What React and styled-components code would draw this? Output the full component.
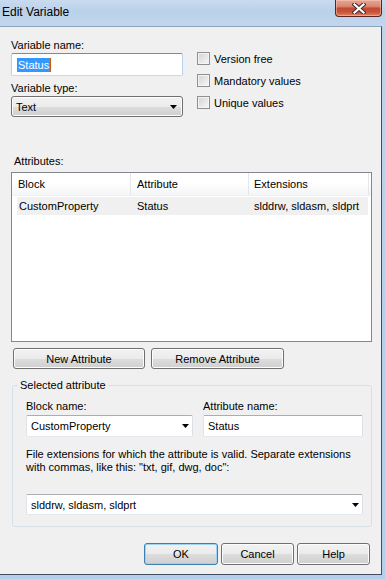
import React from "react";
import styled, { createGlobalStyle, css } from "styled-components";

const Global = createGlobalStyle`
  html, body { margin: 0; padding: 0; overflow: hidden; }
  body { font-family: "Liberation Sans", Arial, sans-serif; font-size: 11px; color: #000; }
  * { box-sizing: border-box; }
`;

const Window = styled.div`
  width: 385px;
  height: 579px;
  display: flex;
  flex-direction: column;
  background: linear-gradient(to bottom, #bfd4ea 0%, #b6cfea 60%, #b3cfec 100%);
`;

const TitleBar = styled.div`
  height: 26px;
  display: flex;
  align-items: flex-start;
  background: linear-gradient(to bottom, #c9dbee 0%, #bad1ea 45%, #c2d7ee 100%);
`;

const Title = styled.div`
  font-family: "Liberation Sans", Arial, sans-serif;
  font-size: 12px;
  line-height: 14px;
  padding: 5px 0 0 2px;
  color: #000;
`;

const CloseButton = styled.div`
  margin-left: auto;
  margin-right: 3px;
  width: 47px;
  height: 17px;
  border: 1px solid #5b2420;
  border-top: none;
  border-radius: 0 0 4px 4px;
  background: linear-gradient(
    to bottom,
    #e6a796 0%,
    #d98670 40%,
    #c24a31 52%,
    #c8533a 75%,
    #dc8467 100%
  );
  box-shadow: inset 0 0 0 1px rgba(255, 210, 200, 0.45);
  display: flex;
  align-items: center;
  justify-content: center;
`;

const Client = styled.div`
  flex: 1;
  margin: 0 3px 4px 0;
  background: #f0f0f0;
  border-top: 1px solid #8fa3bb;
  border-right: 1px solid #3f4d5e;
  border-bottom: 1px solid #3f4d5e;
  display: flex;
  flex-direction: column;
`;

const TopRow = styled.div`
  display: flex;
  gap: 14px;
  padding: 12px 0 0 11px;
`;

const LeftCol = styled.div`
  width: 172px;
  display: flex;
  flex-direction: column;
`;

const RightCol = styled.div`
  display: flex;
  flex-direction: column;
  gap: 9px;
  padding-top: 13px;
`;

const Label = styled.div`
  line-height: 13px;
  height: 13px;
  white-space: nowrap;
  margin-top: ${(p) => p.$mt || 0}px;
  margin-left: ${(p) => p.$ml || 0}px;
`;

const TextBox = styled.div`
  height: ${(p) => p.$h || 22}px;
  margin-top: ${(p) => p.$mt || 0}px;
  background: #fff;
  border: 1px solid;
  border-color: ${(p) =>
    p.$focused ? "#5b93c9 #b4d0ea #c5dcef #b4d0ea" : "#abadb3 #dbdfe6 #e3e9ef #e2e3ea"};
  border-radius: 2px;
  display: flex;
  align-items: center;
  padding-left: ${(p) => p.$pl || 4}px;
  white-space: nowrap;
`;

const Selected = styled.span`
  background: #3399ff;
  color: #fff;
  line-height: 14px;
  padding: 0 1px;
  border-right: 1px solid #c06010;
`;

const winButton = css`
  border: 1px solid #707070;
  border-radius: 3px;
  background: linear-gradient(to bottom, #f2f2f2 0%, #ebebeb 50%, #dddddd 51%, #cfcfcf 100%);
  box-shadow: inset 0 0 0 1px #fcfcfc;
`;

const DropList = styled.div`
  ${winButton};
  height: 21px;
  margin-top: 1px;
  display: flex;
  align-items: center;
  padding: 0 5px 0 4px;
`;

const ComboBox = styled.div`
  height: ${(p) => p.$h || 22}px;
  margin-top: ${(p) => p.$mt || 0}px;
  background: #fff;
  border: 1px solid;
  border-color: #abadb3 #dbdfe6 #e3e9ef #e2e3ea;
  border-radius: 2px;
  display: flex;
  align-items: center;
  padding: 0 3px 0 4px;
`;

const ComboText = styled.span`
  flex: 1;
  white-space: nowrap;
`;

const Arrow = () => (
  <svg width="7" height="4" viewBox="0 0 7 4">
    <polygon points="0,0 7,0 3.5,4" fill="#000" />
  </svg>
);

const CheckRow = styled.label`
  display: flex;
  align-items: center;
  gap: 4px;
  height: 13px;
`;

const CheckBox = styled.span`
  width: 13px;
  height: 13px;
  border: 1px solid #8e8f8f;
  background: linear-gradient(135deg, #d2d2d2 0%, #e9e9e9 60%, #f7f7f7 100%);
  box-shadow: inset 0 0 0 1px #f4f4f4;
`;

const ListView = styled.div`
  width: 361px;
  height: 170px;
  margin: 4px 0 0 11px;
  border: 1px solid #828790;
  background: #fff;
`;

const Header = styled.div`
  display: grid;
  grid-template-columns: 119px 118px 120px;
  height: 23px;
  background: linear-gradient(to bottom, #ffffff 0%, #ffffff 40%, #f4f5f7 100%);
  border-bottom: 1px solid #f0f1f3;
`;

const HeaderCell = styled.div`
  border-right: 1px solid #e3e6ea;
  line-height: 22px;
  padding-left: ${(p) => p.$pl || 6}px;
  white-space: nowrap;
`;

const Row = styled.div`
  display: grid;
  grid-template-columns: 114px 118px 1fr;
  width: 351px;
  height: 18px;
  margin: 1px 0 0 5px;
  background: #f0f0f0;
  line-height: 18px;
`;

const Cell = styled.div`
  padding-left: ${(p) => p.$pl}px;
  white-space: nowrap;
`;

const ButtonRow = styled.div`
  display: flex;
  gap: ${(p) => p.$gap}px;
  margin-top: ${(p) => p.$mt}px;
  padding: ${(p) => (p.$right ? "0 11px 0 0" : "0 0 0 13px")};
  justify-content: ${(p) => (p.$right ? "flex-end" : "flex-start")};
`;

const Button = styled.div`
  ${winButton};
  width: ${(p) => p.$w}px;
  height: ${(p) => p.$h || 21}px;
  display: flex;
  align-items: center;
  justify-content: center;
  white-space: nowrap;
  ${(p) =>
    p.$default &&
    css`
      border-color: #3c7fb1;
      box-shadow: inset 0 0 0 1px #9fd3f0;
    `}
`;

const GroupBox = styled.fieldset`
  width: 360px;
  min-inline-size: 0;
  margin: 10px 0 0 12px;
  padding: 0;
  border: 1px solid #d5dfe5;
  border-radius: 3px;
`;

const Legend = styled.legend`
  margin-left: 5px;
  padding: 0 2px;
  line-height: 13px;
  font-size: 11px;
`;

const GroupBody = styled.div`
  padding: 8px 8px 11px 13px;
  display: flex;
  flex-direction: column;
`;

const FieldGrid = styled.div`
  display: grid;
  grid-template-columns: 167px 160px;
  column-gap: 10px;
`;

const Field = styled.div`
  display: flex;
  flex-direction: column;
`;

const Description = styled.div`
  margin-top: 11px;
  line-height: 13px;
  white-space: nowrap;
`;

export default function App() {
  return (
    <>
      <Global />
      <Window>
        <TitleBar>
          <Title>Edit Variable</Title>
          <CloseButton>
            <svg width="14" height="11" viewBox="0 0 14 11">
              <path d="M2.5 1.5 L11.5 9.5 M11.5 1.5 L2.5 9.5" stroke="#3a2a2a" strokeWidth="4.2" strokeLinecap="square" />
              <path d="M2.5 1.5 L11.5 9.5 M11.5 1.5 L2.5 9.5" stroke="#ffffff" strokeWidth="2.2" strokeLinecap="square" />
            </svg>
          </CloseButton>
        </TitleBar>
        <Client>
          <TopRow>
            <LeftCol>
              <Label>Variable name:</Label>
              <TextBox $mt={1} $h={23} $focused $pl={5}>
                <Selected>Status</Selected>
              </TextBox>
              <Label $mt={6}>Variable type:</Label>
              <DropList>
                <ComboText>Text</ComboText>
                <Arrow />
              </DropList>
            </LeftCol>
            <RightCol>
              <CheckRow>
                <CheckBox />
                Version free
              </CheckRow>
              <CheckRow>
                <CheckBox />
                Mandatory values
              </CheckRow>
              <CheckRow>
                <CheckBox />
                Unique values
              </CheckRow>
            </RightCol>
          </TopRow>

          <Label $mt={38} $ml={14}>Attributes:</Label>
          <ListView>
            <Header>
              <HeaderCell>Block</HeaderCell>
              <HeaderCell>Attribute</HeaderCell>
              <HeaderCell $pl={5}>Extensions</HeaderCell>
            </Header>
            <Row>
              <Cell $pl={2}>CustomProperty</Cell>
              <Cell $pl={6}>Status</Cell>
              <Cell $pl={5}>slddrw, sldasm, sldprt</Cell>
            </Row>
          </ListView>

          <ButtonRow $gap={6} $mt={6}>
            <Button $w={132}>New Attribute</Button>
            <Button $w={133}>Remove Attribute</Button>
          </ButtonRow>

          <GroupBox>
            <Legend>Selected attribute</Legend>
            <GroupBody>
              <FieldGrid>
                <Field>
                  <Label>Block name:</Label>
                  <ComboBox $mt={2}>
                    <ComboText>CustomProperty</ComboText>
                    <Arrow />
                  </ComboBox>
                </Field>
                <Field>
                  <Label>Attribute name:</Label>
                  <TextBox $mt={2}>Status</TextBox>
                </Field>
              </FieldGrid>
              <Description>
                File extensions for which the attribute is valid. Separate extensions
                <br />
                with commas, like this: "txt, gif, dwg, doc":
              </Description>
              <ComboBox $mt={20} $h={21}>
                <ComboText>slddrw, sldasm, sldprt</ComboText>
                <Arrow />
              </ComboBox>
            </GroupBody>
          </GroupBox>

          <ButtonRow $gap={3} $mt={16} $right>
            <Button $w={74} $h={22} $default>OK</Button>
            <Button $w={73} $h={22}>Cancel</Button>
            <Button $w={73} $h={22}>Help</Button>
          </ButtonRow>
        </Client>
      </Window>
    </>
  );
}
